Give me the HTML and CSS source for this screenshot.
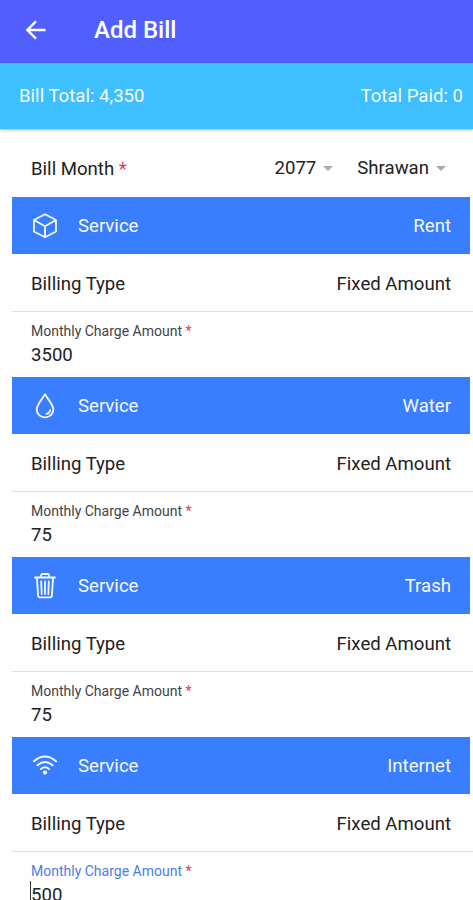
FILE: index.html
```html
<!DOCTYPE html>
<html>
<head>
<meta charset="utf-8">
<title>Add Bill</title>
<link rel="stylesheet" href="styles.css">
</head>

<body>
<div class="toolbar">
  <svg class="back" viewBox="0 0 24 24"><path d="M22.500 12H3M12 2.500L2.500 12l9.500 9.500"/></svg>
  <span class="title">Add Bill</span>
</div>
<div class="totals">
  <span>Bill Total: 4,350</span>
  <span>Total Paid: 0</span>
</div>

<div class="content">
  <div class="month">
    <span class="month-label">Bill Month <span class="star">*</span></span>
    <span class="select year">2077</span>
    <span class="select">Shrawan</span>
  </div>

  <div class="service">
    <div class="bar">
      <svg class="icon" viewBox="0 0 26 26"><path d="M13 1.200L24 7v11.500L13 24.300 2 18.500V7zM2 7l11 6.200L24 7M13 13.200v11"/></svg>
      <span>Service</span>
      <span class="name">Rent</span>
    </div>
    <div class="type"><span>Billing Type</span><span>Fixed Amount</span></div>
    <div class="amount">
      <div class="label">Monthly Charge Amount <span class="star">*</span></div>
      <div class="value">3500</div>
    </div>
  </div>

  <div class="service">
    <div class="bar">
      <svg class="icon" viewBox="0 0 26 26"><path d="M13 1.200C10.500 6 4.700 11.300 4.700 16.800a8.300 7.600 0 0 0 16.600 0C21.300 11.300 15.500 6 13 1.200zM18.200 17.200q-.6 3-3.700 3.700"/></svg>
      <span>Service</span>
      <span class="name">Water</span>
    </div>
    <div class="type"><span>Billing Type</span><span>Fixed Amount</span></div>
    <div class="amount">
      <div class="label">Monthly Charge Amount <span class="star">*</span></div>
      <div class="value">75</div>
    </div>
  </div>

  <div class="service">
    <div class="bar">
      <svg class="icon" viewBox="0 0 26 26"><path d="M3 4.500h20M9 4.300V2.500Q9 1 10.500 1h5Q17 1 17 2.500v1.800M4.900 4.500l1.200 18q.1 1.800 1.800 1.800h10.200q1.700 0 1.800-1.800l1.200-18M9.200 8.500l.5 12.500M13 8.500V21M16.800 8.500l-.5 12.500"/></svg>
      <span>Service</span>
      <span class="name">Trash</span>
    </div>
    <div class="type"><span>Billing Type</span><span>Fixed Amount</span></div>
    <div class="amount">
      <div class="label">Monthly Charge Amount <span class="star">*</span></div>
      <div class="value">75</div>
    </div>
  </div>

  <div class="service">
    <div class="bar">
      <svg class="icon wifi" viewBox="0 0 26 26"><path d="M2 8.300Q13-1.200 24 8.300M5.500 12.200q7.500-6.400 15 0M9 16q4-3.400 8 0"/><circle class="dot" cx="13" cy="19.600" r="2.100"/></svg>
      <span>Service</span>
      <span class="name">Internet</span>
    </div>
    <div class="type"><span>Billing Type</span><span>Fixed Amount</span></div>
    <div class="amount focused">
      <div class="label">Monthly Charge Amount <span class="star">*</span></div>
      <div class="value">500</div>
    </div>
  </div>
</div>
</body>
</html>
```

FILE: styles.css
```css
* {
  box-sizing: border-box;
}
body {
  margin: 0;
  height: 900px;
  overflow: hidden;
  background: #fefefe;
  color: #222;
  font-family: Roboto, sans-serif;
  font-size: 18.600px;
  line-height: 24px;
}
.toolbar {
  display: flex;
  align-items: center;
  height: 63px;
  padding: 0 24px 3px;
  background: #515fff;
  color: #fff;
}
.back {
  width: 24px;
  height: 22px;
  margin-right: 46px;
  fill: none;
  stroke: #fff;
  stroke-width: 2.600;
}
.title {
  font-size: 24px;
  font-weight: 500;
}
.totals {
  display: flex;
  justify-content: space-between;
  align-items: center;
  height: 66px;
  padding: 0 10px 0 19px;
  background: #3ebfff;
  color: #f2fbff;
  box-shadow: 0 1px 3px rgba(0, 0, 0, 0.3);
}
.content {
  padding-left: 12px;
}
.month {
  display: flex;
  align-items: center;
  height: 68px;
  padding: 10px 27px 0 19px;
}
.month-label {
  flex: 1;
  padding-top: 1px;
}
.star {
  color: #e5395a;
}
.select {
  display: flex;
  align-items: center;
}
.select::after {
  content: "";
  margin-left: 7px;
  border: 5.500px solid transparent;
  border-top-color: #aaa;
  border-bottom: 0;
}
.year {
  margin-right: 24px;
}
.service {
  height: 180px;
}
.bar {
  display: flex;
  align-items: center;
  height: 57px;
  margin-right: 3px;
  padding: 0 19px 0 20px;
  background: #397eff;
  color: #f5f9ff;
}
.icon {
  width: 26px;
  height: 26px;
  margin-right: 20px;
  fill: none;
  stroke: #f5f9ff;
  stroke-width: 1.800;
  stroke-linejoin: round;
  stroke-linecap: round;
}
.wifi {
  stroke-width: 2;
}
.dot {
  fill: #f5f9ff;
  stroke: none;
}
.name {
  margin-left: auto;
}
.type {
  display: flex;
  justify-content: space-between;
  align-items: center;
  height: 58px;
  padding: 2px 22px 0 19px;
  border-bottom: 1px solid #e2e2e2;
}
.amount {
  padding: 9px 19px 0;
}
.label {
  font-size: 14px;
  line-height: 20px;
  color: #444;
}
.value {
  line-height: 28px;
}
.focused .label {
  color: #4a7fe8;
}
.focused .value {
  margin-left: -1px;
  border-left: 1px solid #333;
}
```
